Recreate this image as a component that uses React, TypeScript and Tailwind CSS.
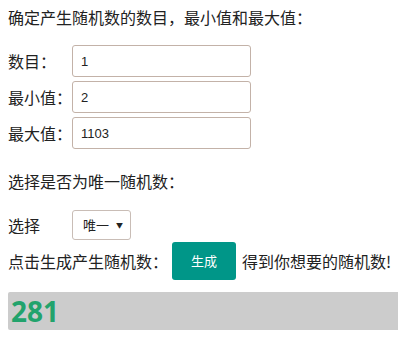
import { useState } from 'react';

const cjk = "font-['Microsoft_YaHei','Noto_Sans_CJK_SC',sans-serif]";

function Field({ label, value }: { label: string; value: string }) {
  return (
    <div className="flex items-center">
      <span className="w-[64px] text-[16px]">{label}</span>
      <input
        defaultValue={value}
        className="h-8 w-[179px] rounded-[3px] border border-[#c3b2a8] px-2 font-['Liberation_Sans',sans-serif] text-[13px] text-[#222] outline-none"
      />
    </div>
  );
}

export default function App() {
  const [result] = useState(281);

  return (
    <div className={`${cjk} px-2 pt-[5px] text-[#222]`}>
      <p className="text-[16px] leading-[24px]">确定产生随机数的数目，最小值和最大值：</p>

      <div className="mt-[16px] flex flex-col gap-1">
        <Field label="数目：" value="1" />
        <Field label="最小值：" value="2" />
        <Field label="最大值：" value="1103" />
      </div>

      <p className="mt-[20px] text-[16px] leading-[24px]">选择是否为唯一随机数：</p>

      <div className="mt-[17px] flex items-center">
        <span className="w-[64px] text-[16px]">选择</span>
        <div className="flex h-[30px] w-[59px] items-center justify-between rounded-[3px] border border-[#c9bdb6] pl-[10px] pr-[7px] text-[13px]">
          <span>唯一</span>
          <span className="text-[7px]">▼</span>
        </div>
      </div>

      <div className="mt-[2px] flex items-center whitespace-nowrap">
        <span className="shrink-0 text-[16px]">点击生成产生随机数：</span>
        <button className="ml-[4px] h-[38px] w-[64px] shrink-0 rounded-[3px] bg-[#009688] text-[13px] text-white">
          生成
        </button>
        <span className="ml-[6px] shrink-0 text-[16px]">得到你想要的随机数!</span>
      </div>

      <div className="mt-[12px] -mr-2 flex h-[38px] items-center rounded-l-[2px] bg-[#cccccc] pl-[3px]">
        <span className="font-['Open_Sans',sans-serif] text-[28px] font-bold leading-none text-[#22a36c]">{result}</span>
      </div>
    </div>
  );
}
